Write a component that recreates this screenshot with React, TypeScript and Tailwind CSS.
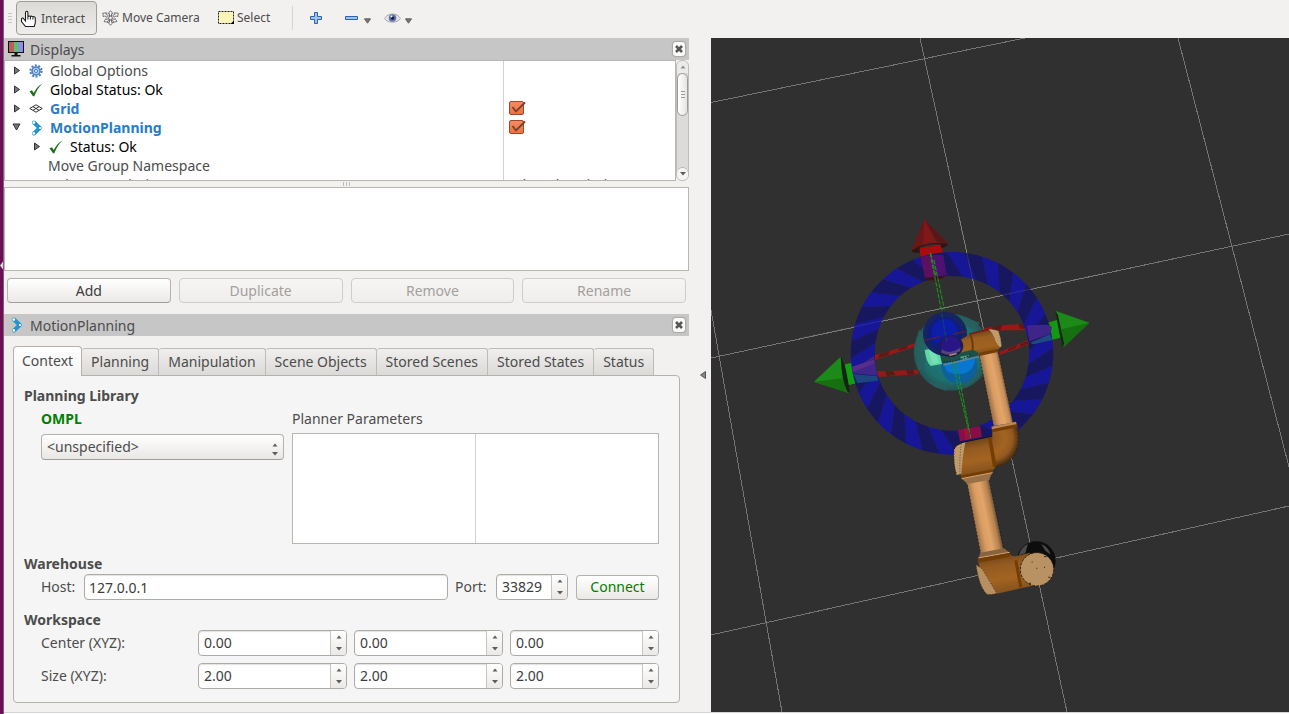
import React, { useState } from 'react'

const INPUT = "h-[26px] w-full min-w-0 rounded-[4px] border border-[#aeaaa5] bg-white px-[4px] text-[14px] text-[#3c3c3c] outline-none shadow-[inset_0_1px_1px_#e4e2e0]";
const BUTTON = "h-[25px] rounded-[4px] border border-[#b5b1ac] border-b-[#a19d98] bg-linear-to-b from-white to-[#ebe9e7] text-[14px] text-[#3c3c3c] disabled:border-[#cfccc9] disabled:from-[#f6f5f4] disabled:to-[#efeeec] disabled:text-[#a3a09d]";

const HandIcon = () => (
  <svg width="18" height="18" viewBox="0 0 18 18" className="shrink-0">
    <path d="M5.500 11V2.800c0-2 2.400-2 2.400 0V7c.2-1.300 2.300-1.300 2.500 0 .2-1.200 2.400-1.100 2.500.3.3-1 2.400-.8 2.400.8V13l-1 3.500H5.500L1.500 11.500V9.200c0-1.500 1.800-1.500 2.200-.4z" fill="#fff" stroke="#1c1c1c" strokeWidth="1.100" />
    <path d="M7.900 7v2.500M10.400 7v2.500M12.900 7.500V9.500" stroke="#1c1c1c" strokeWidth="1" />
  </svg>
);

const CameraMoveIcon = () => (
  <svg width="17" height="16" viewBox="0 0 17 16" className="shrink-0" fill="#fbfbfb" stroke="#555" strokeWidth="0.800">
    <path d="M8.500.7l2.500 3H9.500v2.300h-2V3.700H6zM8.500 15.300l2.500-3H9.500V10h-2v2.300H6z" />
    <path d="M.7 3.200l4-.4-1 1.300 2.600 1.600-1.200 1.600L2.600 5.800 1.500 7zM16.300 3.200l-4-.4 1 1.300-2.600 1.600 1.200 1.600 2.500-1.500L15.500 7z" />
    <path d="M2 11.500l2-3 .6 1.100 2-1 .8 1.500-2 1.200.5 1zM15 11.500l-2-3-.6 1.100-2-1-.8 1.500 2 1.200-.5 1z" />
    <circle cx="8.500" cy="8" r="1.800" />
  </svg>
);

const SelectIcon = () => (
  <svg width="17" height="14" viewBox="0 0 17 14" className="shrink-0">
    <rect x="0.500" y="0.500" width="15" height="12" fill="#fbf5b7" stroke="#1a1a1a" strokeWidth="1" strokeDasharray="2 1" />
    <path d="M16 9.500V13h-3.500z" fill="#000" />
  </svg>
);

const MonitorIcon = () => (
  <svg width="16" height="16" viewBox="0 0 16 16" className="shrink-0">
    <rect x="0" y="0" width="16" height="12" fill="#111" />
    <rect x="1" y="1" width="5" height="10" fill="#b95f5f" />
    <rect x="6" y="1" width="4" height="10" fill="#5fc06a" />
    <rect x="10" y="1" width="5" height="10" fill="#8e8ee6" />
    <path d="M6.500 12h3v2h-3zM3.500 14h9v1.500h-9z" fill="#111" />
  </svg>
);

const MotionIcon = () => (
  <svg width="12" height="16" viewBox="0 0 12 16" className="shrink-0">
    <path d="M3 2.500L8.700 8 3 13.500" fill="none" stroke="#2493cd" strokeWidth="4" strokeLinecap="round" strokeLinejoin="round" />
    <circle cx="2.800" cy="2.600" r="1.300" fill="#fff" />
    <circle cx="9" cy="8" r="1.100" fill="#fff" />
    <circle cx="2.800" cy="13.400" r="1.300" fill="#fff" />
  </svg>
);

const GearIcon = () => (
  <svg width="14" height="14" viewBox="0 0 14 14">
    <circle cx="7" cy="7" r="5.600" fill="none" stroke="#4a7dbd" strokeWidth="2" strokeDasharray="2 1.500" />
    <circle cx="7" cy="7" r="4" fill="#a9c6e8" stroke="#4a7dbd" strokeWidth="1.500" />
    <circle cx="7" cy="7" r="1.500" fill="#fff" stroke="#4a7dbd" />
  </svg>
);

const CheckIcon = () => (
  <svg width="14" height="14" viewBox="0 0 14 14">
    <path d="M.5 8.300L3 7.200l1.700 2.900C6.600 6.300 9 2.800 13.500.4 9.700 4 7.300 8 5.300 13.300H4z" fill="#1d6f1d" />
  </svg>
);

const GridIcon = () => (
  <svg width="14" height="10" viewBox="0 0 14 10" fill="none" stroke="#333" strokeWidth="1">
    <path d="M7 .8L13.200 4.500 7 8.200.8 4.500zM3.900 2.600l6.200 3.800M10.100 2.600L3.900 6.400" />
  </svg>
);

const Expander = ({ open }: { open?: boolean }) => (
  <button type="button" aria-label={open ? "Collapse" : "Expand"} className="flex h-[9px] w-[9px] items-center justify-center">
    <svg width="9" height="9" viewBox="0 0 9 9" fill="#777" stroke="#333" strokeWidth="1">
      {open ? <path d="M1 1h7L4.500 7z" /> : <path d="M2.500 1l5 3.500-5 3.500z" />}
    </svg>
  </button>
);

const Triangle = ({ up }: { up?: boolean }) => (
  <svg width="6" height="4" viewBox="0 0 6 4" fill="#5f5c59">
    {up ? <path d="M.5 3.500L3 .5l2.500 3z" /> : <path d="M0 0h6L3 3.500z" />}
  </svg>
);

const DockTitle = ({ icon, title }: { icon: React.ReactNode; title: string }) => (
  <div className="flex h-[22px] shrink-0 items-center bg-[#c6c6c6] pr-[4px] pl-1">
    <span className="flex w-[22px] items-center">{icon}</span>
    <h2 className="flex-1 pt-px text-[14px] leading-[22px]">{title}</h2>
    <button type="button" aria-label={"Close " + title} className="flex h-[14px] w-[12px] items-center justify-center rounded-[3px] bg-[#fbfbfa] shadow-[0_0_1px_1px_#aaa7a4]">
      <svg width="8" height="8" viewBox="0 0 8 8" stroke="#555" strokeWidth="2.600">
        <path d="M1 1l6 6M7 1L1 7" />
      </svg>
    </button>
  </div>
);

const SpinBox = ({ label, value }: { label: string; value: string }) => {
  const [current, setCurrent] = useState(value);
  const digits = (value.split(".")[1] || "").length;
  const step = (by: number) => setCurrent((Number(current) + by).toFixed(digits));

  return (
    <div className="flex h-[26px] w-full overflow-hidden rounded-[4px] border border-[#aeaaa5] bg-white shadow-[inset_0_1px_1px_#e4e2e0]">
      <input type="text" aria-label={label} value={current} onChange={(e) => setCurrent(e.target.value)}
        className="w-full min-w-0 flex-1 bg-transparent pl-[5px] text-[14px] text-[#3c3c3c] outline-none" />
      <div className="flex w-[16px] shrink-0 flex-col border-l border-[#c9c6c2] bg-linear-to-b from-white to-[#ebe9e7]">
        <button type="button" aria-label={label + " up"} onClick={() => step(1)} className="flex flex-1 items-center justify-center"><Triangle up /></button>
        <button type="button" aria-label={label + " down"} onClick={() => step(-1)} className="flex flex-1 items-center justify-center"><Triangle /></button>
      </div>
    </div>
  );
};

const Toolbar = () => (
  <div className="flex h-[38px] shrink-0 items-center pb-[2px] pl-[4px] text-[12px]">
    <div className="mr-[4px] flex w-[4px] flex-col gap-[2px]">
      <i className="h-px bg-[#c9c6c3]" /><i className="h-px bg-[#c9c6c3]" /><i className="h-px bg-[#c9c6c3]" /><i className="h-px bg-[#c9c6c3]" />
    </div>
    <button type="button" className="flex h-[34px] w-[81px] items-center gap-[3px] rounded-[4px] border border-[#a09c96] bg-linear-to-b from-[#dcdad7] to-[#efedeb] pt-[2px] pl-[3px]">
      <HandIcon />Interact
    </button>
    <button type="button" className="ml-[5px] flex w-[109px] items-center gap-[3px]"><CameraMoveIcon />Move Camera</button>
    <button type="button" className="ml-[7px] flex w-[60px] items-center gap-[2px]"><SelectIcon />Select</button>
    <div className="ml-[14px] h-[24px] w-px bg-[#d6d3d0]" />
    <button type="button" aria-label="Add tool" className="ml-[17px]">
      <svg width="12" height="12" viewBox="0 0 12 12"><path d="M4.500.5h3v4h4v3h-4v4h-3v-4h-4v-3h4z" fill="#9cc3ec" stroke="#2d63a8" /></svg>
    </button>
    <button type="button" aria-label="Remove tool" className="ml-[23px] flex items-end gap-[6px]">
      <svg width="13" height="12" viewBox="0 0 13 12"><path d="M.5 4.500h12v3H.5z" fill="#9cc3ec" stroke="#2d63a8" /></svg>
      <svg width="7" height="6" viewBox="0 0 8 6"><path d="M.5.5h7L4 5.500z" fill="#777" stroke="#555" /></svg>
    </button>
    <button type="button" aria-label="View options" className="ml-[13px] flex items-end gap-[4px]">
      <svg width="17" height="12" viewBox="0 0 17 12">
        <path d="M.5 6.500C4 .5 13 .5 16.500 6.500 13 11.500 4 11.500.5 6.500z" fill="#e6e6e6" stroke="#aaa" />
        <circle cx="8.500" cy="6" r="3.800" fill="#6374ae" /><circle cx="8.500" cy="6" r="1.800" fill="#111735" /><circle cx="7.500" cy="4.500" r="1" fill="#fff" />
      </svg>
      <svg width="7" height="6" viewBox="0 0 8 6"><path d="M.5.5h7L4 5.500z" fill="#777" stroke="#555" /></svg>
    </button>
  </div>
);

const ROWS = [
  { name: "Global Options", icon: <GearIcon />, style: "text-[#4c4c4c]" },
  { name: "Global Status: Ok", icon: <CheckIcon />, style: "text-black" },
  { name: "Grid", icon: <GridIcon />, style: "font-bold text-[#2a7bc8]", check: true },
  { name: "MotionPlanning", icon: <span className="pl-[2px]"><MotionIcon /></span>, style: "font-bold text-[#2a7bc8]", check: true, open: true },
  { name: "Status: Ok", icon: <CheckIcon />, style: "text-black", child: true },
  { name: "Move Group Namespace", style: "text-[#4c4c4c]" },
  { name: "Robot Description", style: "text-[#4c4c4c]", value: "robot_description" },
];

const DisplayTree = () => (
  <div className="flex min-h-0 flex-1">
    <div className="min-w-0 flex-1 overflow-hidden border border-[#b9b5b0] bg-white">
      <table className="w-full table-fixed border-collapse text-[14px] leading-[19px]">
        <tbody>
          {ROWS.map((row) => (
            <tr key={row.name} className="h-[19px]">
              <td className="border-r border-[#d4d2d0] p-0">
                {row.icon ? (
                  <div className={row.child ? "flex items-center pl-[27px]" : "flex items-center pl-[7px]"}>
                    <Expander open={row.open} />
                    <span className="ml-[8px] flex h-[19px] w-[21px] items-center">{row.icon}</span>
                    <span className={row.style}>{row.name}</span>
                  </div>
                ) : <div className={"pl-[43px] " + row.style}>{row.name}</div>}
              </td>
              <td className="w-[172px] p-0 pl-[5px]">
                {row.check && (
                  <label className="relative block h-[15px] w-[17px]">
                    <input type="checkbox" defaultChecked aria-label={row.name} className="block h-[14px] w-[15px] appearance-none rounded-[2px] border border-[#9a4a2a] bg-linear-to-b from-[#f58a63] to-[#f0703f]" />
                    <svg width="17" height="15" viewBox="0 0 17 15" className="pointer-events-none absolute top-0 left-0" fill="none">
                      <path d="M3.500 6l3.500 4.500L16 1.500" stroke="#74412c" strokeWidth="1.800" />
                    </svg>
                  </label>
                )}
                {row.value}
              </td>
            </tr>
          ))}
        </tbody>
      </table>
    </div>
    <div className="flex w-[13px] shrink-0 flex-col overflow-hidden rounded-[6px] border border-[#c0bdb9] bg-[#dddbd9]">
      <button type="button" aria-label="Scroll up" className="flex h-[12px] items-center justify-center bg-[#f6f5f4] opacity-60"><Triangle up /></button>
      <div className="flex h-[43px] flex-col items-center justify-center gap-[2px] rounded-[6px] border border-[#9d9994] bg-linear-to-r from-white to-[#e6e4e2]">
        <i className="h-px w-[4px] bg-[#999]" /><i className="h-px w-[4px] bg-[#999]" /><i className="h-px w-[4px] bg-[#999]" />
      </div>
      <div className="flex-1" />
      <button type="button" aria-label="Scroll down" className="flex h-[13px] items-center justify-center rounded-t-[6px] border-t border-[#b5b1ac] bg-[#f6f5f4]"><Triangle /></button>
    </div>
  </div>
);

const TABS = ["Context", "Planning", "Manipulation", "Scene Objects", "Stored Scenes", "Stored States", "Status"];

const MotionTabs = () => {
  const [active, setActive] = useState("Context");

  return (
    <div className="mx-[9px] mt-[10px] mb-[9px] shrink-0">
      <div role="tablist" className="flex h-[29px] items-end">
        {TABS.map((tab) => (
          <button key={tab} type="button" role="tab" aria-selected={active === tab} onClick={() => setActive(tab)}
            className={active === tab
              ? "relative -mb-px h-[30px] rounded-t-[4px] border border-b-0 border-[#b5b1ac] bg-linear-to-b from-white to-[#f5f5f5] px-[8px] pb-[2px] text-[14px]"
              : "h-[27px] rounded-t-[3px] border border-b-0 border-l-0 border-[#bfbbb7] bg-linear-to-b from-[#f0efed] to-[#dcdad8] px-[9px] text-[14px]"}>
            {tab}
          </button>
        ))}
      </div>

      <div role="tabpanel" className="rounded-[4px] rounded-tl-none border border-[#b5b1ac] bg-[#f5f5f5] pt-[10px] pr-[20px] pb-[13px] pl-[10px]">
        <h3 className="font-bold">Planning Library</h3>
        <div className="mt-[3px] grid grid-cols-[243fr_367fr] gap-x-[8px] pl-[17px]">
          <div>
            <div className="font-bold text-[#008000]">OMPL</div>
            <div className="relative mt-[5px]">
              <select aria-label="Planner" className="h-[26px] w-full appearance-none rounded-[4px] border border-[#b5b1ac] border-b-[#a19d98] bg-linear-to-b from-white to-[#e9e7e5] pl-[5px] text-[14px] text-[#4c4c4c]">
                <option>&lt;unspecified&gt;</option>
              </select>
              <span className="pointer-events-none absolute top-[9px] right-[6px] flex flex-col gap-[5px]"><Triangle up /><Triangle /></span>
            </div>
          </div>
          <div>
            <div>Planner Parameters</div>
            <div className="mt-[4px] grid h-[111px] grid-cols-2 border border-[#b9b5b0] bg-white">
              <div className="border-r border-[#d4d2d0]" />
            </div>
          </div>
        </div>

        <h3 className="mt-[10px] font-bold">Warehouse</h3>
        <div className="flex items-center pl-[17px]">
          <label htmlFor="host" className="w-[43px]">Host:</label>
          <div className="min-w-0 flex-1"><input id="host" type="text" defaultValue="127.0.0.1" className={INPUT} /></div>
          <span className="ml-[7px] w-[41px]">Port:</span>
          <div className="w-[72px]"><SpinBox label="Port" value="33829" /></div>
          <button type="button" className="ml-[8px] h-[25px] w-[83px] rounded-[4px] border border-[#b5b1ac] border-b-[#a19d98] bg-linear-to-b from-white to-[#ebe9e7] text-[14px] text-[#008000]">Connect</button>
        </div>

        <h3 className="mt-[10px] font-bold">Workspace</h3>
        <div className="grid grid-cols-[150px_1fr_1fr_1fr] items-center gap-x-[7px] gap-y-[7px] pl-[17px]">
          <span>Center (XYZ):</span>
          <SpinBox label="Center X" value="0.00" />
          <SpinBox label="Center Y" value="0.00" />
          <SpinBox label="Center Z" value="0.00" />
          <span>Size (XYZ):</span>
          <SpinBox label="Size X" value="2.00" />
          <SpinBox label="Size Y" value="2.00" />
          <SpinBox label="Size Z" value="2.00" />
        </div>
      </div>
    </div>
  );
};

// ring around the end effector, 36 slanted stripes
const ringPoint = (radius: number, deg: number) => {
  const a = (deg * Math.PI) / 180;
  return (456 + radius * Math.sin(a)).toFixed(1) + " " + (460 - radius * Math.cos(a)).toFixed(1);
};

const stripes = Array.from({ length: 36 }, (_, i) => {
  const a = i * 10 - 3;
  return "M" + ringPoint(304, a) + "A304 304 0 0 1 " + ringPoint(304, a + 10) +
    "L" + ringPoint(232, a + 21) + "A232 232 0 0 0 " + ringPoint(232, a + 11) + "Z";
});

const Scene = () => (
  <svg viewBox="711 38 578 674" preserveAspectRatio="xMidYMid slice" className="block h-full w-full bg-[#303030]" role="img" aria-label="Robot arm">
    <defs>
      <linearGradient id="link1" gradientUnits="userSpaceOnUse" x1="560" y1="570" x2="617" y2="558">
        <stop offset="0" stopColor="#9b7048" /><stop offset="0.300" stopColor="#d99d63" /><stop offset="0.550" stopColor="#e3a568" /><stop offset="0.850" stopColor="#c58e5a" /><stop offset="1" stopColor="#6f5136" />
      </linearGradient>
      <linearGradient id="link2" gradientUnits="userSpaceOnUse" x1="521" y1="960" x2="589" y2="946">
        <stop offset="0" stopColor="#9b7048" /><stop offset="0.300" stopColor="#d99d63" /><stop offset="0.550" stopColor="#e3a568" /><stop offset="0.850" stopColor="#b5824f" /><stop offset="1" stopColor="#6f5136" />
      </linearGradient>
      <linearGradient id="wrist" gradientUnits="userSpaceOnUse" x1="535" y1="392" x2="548" y2="465">
        <stop offset="0" stopColor="#6b4016" /><stop offset="0.300" stopColor="#9a5e20" /><stop offset="0.700" stopColor="#a0621f" /><stop offset="1" stopColor="#774919" />
      </linearGradient>
      <linearGradient id="elbow" gradientUnits="userSpaceOnUse" x1="535" y1="715" x2="555" y2="820">
        <stop offset="0" stopColor="#6a421a" /><stop offset="0.250" stopColor="#935a20" /><stop offset="0.600" stopColor="#a36421" /><stop offset="1" stopColor="#80501d" />
      </linearGradient>
      <radialGradient id="bend" gradientUnits="userSpaceOnUse" cx="572" cy="715" r="88">
        <stop offset="0" stopColor="#8a541e" /><stop offset="0.500" stopColor="#a36421" /><stop offset="0.750" stopColor="#93591f" /><stop offset="1" stopColor="#402812" />
      </radialGradient>
      <linearGradient id="base" gradientUnits="userSpaceOnUse" x1="610" y1="1065" x2="628" y2="1172">
        <stop offset="0" stopColor="#74481b" /><stop offset="0.250" stopColor="#935a20" /><stop offset="0.650" stopColor="#a36421" /><stop offset="1" stopColor="#87531e" />
      </linearGradient>
      <radialGradient id="teal">
        <stop offset="0" stopColor="#1c807f" /><stop offset="0.750" stopColor="#1d706f" /><stop offset="1" stopColor="#245453" />
      </radialGradient>
    </defs>

    <path d="M711 102.500L1025 38M711 358L1289 234M711 635L1289 506M711 310L782 712M920 38L1067 712M1178 38L1289 467" stroke="#757575" strokeWidth="1" shapeRendering="crispEdges" />

    <g transform="translate(800 200) scale(0.3333)">
      {/* green arrows */}
      <path d="M135 495L200 481 210 540 140 556z" fill="#158a12" />
      <path d="M42 545L122 470 148 580z" fill="#1c8a19" />
      <path d="M42 545L128 535 148 580z" fill="#17700f" />
      <path d="M122 468Q140 500 150 580L142 574Q124 540 122 468z" fill="#122512" />
      <path d="M135 493L157 488 170 548 147 555z" fill="#13a010" />
      <path d="M710 378L778 358 788 412 720 428z" fill="#13980f" />
      <path d="M868 368L768 333 790 442z" fill="#1c8a19" />
      <path d="M868 368L784 388 790 442z" fill="#17700f" />
      <path d="M766 332L774 345 792 430 789 443 778 400z" fill="#122512" />

      {/* red ring, nearly edge-on */}
      <path d="M157 503L225 466 345 430 345 440 235 476 170 505zM551 385L615 375 690 371 755 374 690 390 620 391 551 395z" fill="#981717" />
      <path d="M157 518L235 514 355 509 355 523 235 531 170 525zM598 455L690 418 750 398 750 408 690 432 600 465z" fill="#981717" />
      <path d="M240 462l30-9-6 12-30 9zM300 443l24-7-4 10-26 7zM255 514l25-1 6 13-25 2zM318 511l22-1 4 13-20 1zM575 382l30-6-4 16-26 2zM655 373l22-2 4 14-20 2zM625 447l26-11-4 8-24 10zM660 433l24-10v8l-22 9z" fill="#5a1a1a" />

      {/* red arrow */}
      <path d="M357 145L424 133 441 228Q405 248 376 238z" fill="#a80c0c" />
      <path d="M373 58L334 152Q380 120 446 133z" fill="#7d1919" />
      <path d="M373 58L334 152 368 134z" fill="#691717" />
      <path d="M373 58L410 126 446 133z" fill="#5a1717" />
      <path d="M334 152Q380 120 446 133Q438 142 425 144L421 133Q390 128 358 142L360 158Q340 160 334 152z" fill="#2c1515" />

      {stripes.map((d, i) => <path key={i} d={d} fill={i % 2 ? "#17175f" : "#161697"} />)}

      <path d="M362 172Q400 160 430 166L441 227Q410 235 375 233z" fill="#4d1270" />
      <path d="M362 172Q380 165 396 165L410 232Q390 236 375 233z" fill="#621058" opacity="0.700" />
      <path d="M375 234L441 226Q415 247 378 240z" fill="#351616" />
      <path d="M155 504L190 488 222 468 232 527 160 520z" fill="#3f268a" />
      <path d="M160 522L232 529 234 542 172 550z" fill="#1d4680" />
      <path d="M155 500L222 480 224 490 160 515zM690 400L750 383 752 392 692 412z" fill="#5a2d8c" />
      <path d="M680 376L745 374 756 382 750 402 688 424z" fill="#3f248a" />
      <path d="M690 428L750 403 758 420 700 433z" fill="#1d4a80" />
      <path d="M0 415L900 223M466 0L550 385" stroke="#aaa" strokeWidth="2" opacity="0.250" />
      <path d="M474 690L540 678 546 710 480 724z" fill="#860f45" />
      <path d="M490 686L503 684 509 717 496 720z" fill="#a01040" />

      {/* end effector */}
      <circle cx="456" cy="457" r="115" fill="url(#teal)" />
      <path d="M342 450L356 390 380 398 374 510 355 510zM470 343L540 368 520 390 490 372zM380 543L440 555 440 573 405 562zM530 500L545 520 500 562 490 545z" fill="#28605f" opacity="0.800" />
      <circle cx="478" cy="497" r="54" fill="#0d5f9e" />
      <path d="M430 490L526 474Q525 505 500 518Q465 530 440 512z" fill="#0877d2" />
      <path d="M412 440L540 440 538 466 426 490z" fill="#1c5046" />
      <path d="M374 450L415 442 426 492 392 498Q378 485 374 450z" fill="#64d5a7" />
      <path d="M385 452L405 446 416 488 398 492z" fill="#73e3b6" />
      <path d="M480 470L508 465 500 476 485 480z" fill="#58a58c" />
      <path d="M430 485Q470 488 510 465" fill="none" stroke="#16332c" strokeWidth="4" strokeDasharray="5 4" />
      <path d="M430 495L545 468" stroke="#6a828c" strokeWidth="4" />
      <circle cx="435" cy="402" r="66" fill="#16245f" />
      <circle cx="433" cy="402" r="51" fill="#101d7d" />
      <circle cx="434" cy="398" r="40" fill="#0a1eaa" />
      <path d="M372 422L420 410M460 402L500 394" stroke="#45204d" strokeWidth="6" />

      {/* wrist */}
      <path d="M484 418C495 412 505 405 511 402L572 388Q598 392 600 420L604 440Q596 445 592 452L537 465Q532 450 514 450Q500 452 478 460z" fill="url(#wrist)" />
      <path d="M566 388Q575 386 595 392Q604 415 605 438L600 442Q592 436 586 424Q580 402 566 388z" fill="#c19a6c" />
      <path d="M566 388Q580 402 586 424Q592 436 600 442M575 386Q590 388 597 396L605 438" fill="none" stroke="#60472c" strokeWidth="2" strokeDasharray="3 5" />
      <path d="M511 404Q520 425 518 450" stroke="#6d3b09" strokeWidth="6" fill="none" />
      <path d="M508 402L566 388" stroke="#7a1a10" strokeWidth="5" />
      <ellipse cx="452" cy="438" rx="38" ry="32" fill="#1c1b5c" />
      <circle cx="452" cy="437" r="29" fill="#2a1587" />
      <path d="M425 448Q450 466 482 442L480 454Q450 472 424 458z" fill="#54467d" />
      <path d="M420 458Q445 480 482 456" fill="none" stroke="#171717" strokeWidth="3" strokeDasharray="6 3" />
      <path d="M448 466L470 461" stroke="#c49a6c" strokeWidth="4" />

      <g fill="none" stroke="#1a9a1a" strokeWidth="3" strokeDasharray="14 4">
        <path d="M390 158L425 335M402 180L433 328M392 160L408 230M457 485L506 690M470 490L512 715" />
        <path d="M425 340L440 425" stroke="#164a5d" />
      </g>

      {/* upper link */}
      <path d="M538 464L594 453 639 668 581 678z" fill="url(#link1)" />
      <path d="M536 459L592 447 594 456 538 468z" fill="#713d09" />

      {/* elbow */}
      <path d="M488 728L578 708 586 803Q578 808 576 816L485 834 474 795z" fill="url(#elbow)" />
      <path d="M577 712L577 692 651 673C660 710 658 745 640 770Q620 796 585 803z" fill="url(#bend)" />
      <path d="M574 680L648 665 651 676 577 691z" fill="#bb8854" />
      <path d="M575 688L651 672 652 682 577 697zM564 714L574 712 590 798 579 802z" fill="#743d04" />
      <path d="M462 748Q464 734 496 726Q486 775 484 822L470 825Q460 790 462 748z" fill="#c09a6b" />
      <path d="M484 732Q478 775 480 822M463 745L462 795 470 822" fill="none" stroke="#332313" strokeWidth="2" strokeDasharray="3 5" />
      <path d="M462 748Q467 734 492 726L576 709" fill="none" stroke="#171310" strokeWidth="3" />

      {/* lower link */}
      <path d="M483 826L577 808 579 818 485 838z" fill="#743d04" />
      <path d="M485 836L578 818Q572 824 567 843L503 855Q498 845 485 836z" fill="#9a7047" />
      <path d="M485 836L578 818" stroke="#d5a374" strokeWidth="3" />
      <path d="M502 852L567 840 611 1052 543 1066z" fill="url(#link2)" />
      <path d="M541 1058L612 1045 629 1058 535 1076z" fill="#87633f" />
      <path d="M535 1074L629 1057" stroke="#d5a374" strokeWidth="3" />
      <path d="M595 458L639 665M538 468L580 676M655 690Q660 740 640 774M568 843L612 1046M502 855L542 1060" fill="none" stroke="#14110e" strokeWidth="2" strokeDasharray="4 7" />

      {/* base */}
      <circle cx="709" cy="1082" r="58" fill="#0d0d0d" />
      <path d="M656 1066Q664 1040 684 1032L676 1060zM724 1032Q745 1040 752 1064L736 1052z" fill="#4a4a4a" />
      <path d="M533 1080L630 1062Q636 1072 652 1067L690 1058 708 1155 590 1181 540 1105z" fill="url(#base)" />
      <path d="M533 1076L629 1059 630 1070 535 1088zM643 1082L652 1080 667 1160 658 1163z" fill="#743d04" />
      <path d="M528 1094L546 1106 590 1180Q570 1186 560 1182Q538 1160 528 1094z" fill="#b68f62" stroke="#312415" strokeWidth="2" strokeDasharray="3 6" />
      <circle cx="711" cy="1108" r="50" fill="#b89263" stroke="#2d2116" strokeWidth="3" strokeDasharray="8 4" />
      <path d="M695 1086h3M709 1105h3M732 1102h3M732 1070h8M686 1150h7M745 1132h6" stroke="#2d2116" strokeWidth="3" />
    </g>
  </svg>
);

const App = () => {
  return (
    <div className="flex h-screen w-full overflow-hidden bg-[#f2f1f0] font-['Noto_Sans','Open_Sans',sans-serif] text-[14px] leading-[20px] text-[#4c4c4c]">
      <div className="w-[4px] shrink-0 border-r border-[#8d5580] bg-[#681152] pt-[261px]">
        <svg width="3" height="9" viewBox="0 0 3 9"><path d="M3 .5v8L0 4.500z" fill="#ddd" /></svg>
      </div>

      <div className="flex min-w-0 flex-1 flex-col">
        <Toolbar />
        <main className="grid min-h-0 flex-1 grid-cols-[minmax(0,685fr)_22px_minmax(0,578fr)]">
          <div className="flex min-h-0 flex-col">
            <DockTitle icon={<MonitorIcon />} title="Displays" />
            <DisplayTree />
            <div className="flex h-[6px] shrink-0 items-center justify-center gap-[2px]">
              <i className="h-[4px] w-px bg-[#bbb]" /><i className="h-[4px] w-px bg-[#bbb]" /><i className="h-[4px] w-px bg-[#bbb]" />
            </div>
            <div className="h-[84px] shrink-0 border border-[#b9b5b0] bg-white" />
            <div className="mt-[7px] mb-[11px] grid shrink-0 grid-cols-4 gap-[8px] px-[3px]">
              <button type="button" className={BUTTON}>Add</button>
              <button type="button" disabled className={BUTTON}>Duplicate</button>
              <button type="button" disabled className={BUTTON}>Remove</button>
              <button type="button" disabled className={BUTTON}>Rename</button>
            </div>
            <DockTitle icon={<span className="pl-[3px]"><MotionIcon /></span>} title="MotionPlanning" />
            <MotionTabs />
          </div>

          <button type="button" aria-label="Collapse panel" className="flex items-center justify-end pr-[5px]">
            <svg width="6" height="8" viewBox="0 0 6 8"><path d="M5.500.5v7L.5 4z" fill="#888" stroke="#555" /></svg>
          </button>

          <div className="min-h-0 overflow-hidden"><Scene /></div>
        </main>
        <div className="h-[2px] shrink-0 border-t border-[#d5d3d0] bg-white" />
      </div>
    </div>
  )
}

export default App
